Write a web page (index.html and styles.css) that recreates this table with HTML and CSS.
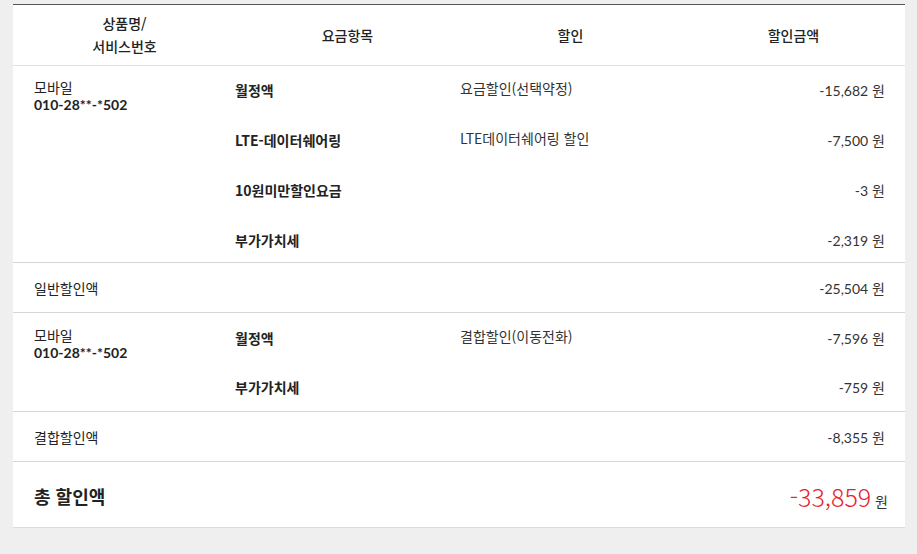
FILE: index.html
```html
<!DOCTYPE html>
<html lang="ko">
<head>
<meta charset="utf-8">
<title>할인 내역</title>
<link rel="stylesheet" href="styles.css">
</head>
<body>
<div class="panel">
  <div class="head">
    <div class="hcell">상품명/<br>서비스번호</div>
    <div class="hcell">요금항목</div>
    <div class="hcell">할인</div>
    <div class="hcell">할인금액</div>
  </div>

  <div class="group g1">
    <div class="svc">
      <div class="svc-name">모바일</div>
      <div class="svc-num">010-28**-*502</div>
    </div>
    <div class="items">
      <div class="item"><div class="iname">월정액</div><div class="idisc">요금할인(선택약정)</div><div class="amt"><span class="num">-15,682</span> <span class="won">원</span></div></div>
      <div class="item"><div class="iname">LTE-데이터쉐어링</div><div class="idisc">LTE데이터쉐어링 할인</div><div class="amt"><span class="num">-7,500</span> <span class="won">원</span></div></div>
      <div class="item"><div class="iname">10원미만할인요금</div><div class="idisc"></div><div class="amt"><span class="num">-3</span> <span class="won">원</span></div></div>
      <div class="item"><div class="iname">부가가치세</div><div class="idisc"></div><div class="amt"><span class="num">-2,319</span> <span class="won">원</span></div></div>
    </div>
  </div>

  <div class="sum">
    <div class="sum-label">일반할인액</div>
    <div class="amt"><span class="num">-25,504</span> <span class="won">원</span></div>
  </div>

  <div class="group g2">
    <div class="svc">
      <div class="svc-name">모바일</div>
      <div class="svc-num">010-28**-*502</div>
    </div>
    <div class="items">
      <div class="item"><div class="iname">월정액</div><div class="idisc">결합할인(이동전화)</div><div class="amt"><span class="num">-7,596</span> <span class="won">원</span></div></div>
      <div class="item"><div class="iname">부가가치세</div><div class="idisc"></div><div class="amt"><span class="num">-759</span> <span class="won">원</span></div></div>
    </div>
  </div>

  <div class="sum">
    <div class="sum-label">결합할인액</div>
    <div class="amt"><span class="num">-8,355</span> <span class="won">원</span></div>
  </div>

  <div class="total">
    <div class="total-label">총 할인액</div>
    <div class="total-amt"><span class="total-num">-33,859</span> <span class="won">원</span></div>
  </div>
</div>
</body>
</html>
```

FILE: styles.css
```css
html, body {
  margin: 0;
  padding: 0;
  background: #efefef;
}

body {
  padding: 4px 12px 0 13px;
  font-family: "Noto Sans CJK KR", "Noto Sans", sans-serif;
  font-size: 14px;
  color: #333;
}

.panel {
  background: #fff;
  border-top: 1px solid #555;
  border-bottom: 1px solid #dcdcdc;
  width: 892px;
}

.head {
  display: grid;
  grid-template-columns: repeat(4, 223px);
  height: 60px;
  border-bottom: 1px solid #e2e2e2;
}

.hcell {
  display: flex;
  align-items: center;
  justify-content: center;
  text-align: center;
  line-height: 23px;
  color: #222;
  font-weight: 500;
}

.group {
  display: flex;
  border-bottom: 1px solid #d6d6d6;
}

.g1 {
  padding: 12px 0 10px;
}

.g2 {
  padding: 13px 0 12px;
}

.svc {
  width: 201px;
  padding-left: 21px;
  line-height: 18px;
}

.svc-name {
  color: #222;
  line-height: 18px;
  height: 18px;
}

.svc-num {
  font-family: "Lato", "Noto Sans", sans-serif;
  font-weight: 700;
  color: #222;
  line-height: 18px;
  height: 18px;
}

.items {
  flex: 1;
  display: flex;
  flex-direction: column;
}

.g1 .items {
  gap: 26px;
}

.g2 .items {
  gap: 25px;
}

.item {
  display: grid;
  grid-template-columns: 225px 1fr auto;
  line-height: 24px;
  height: 24px;
}

.iname {
  font-weight: 700;
  color: #222;
}

.idisc {
  color: #333;
  margin-top: -2px;
}

.amt {
  padding-right: 20px;
  text-align: right;
  white-space: nowrap;
}

.num {
  font-family: "Lato", "Noto Sans", sans-serif;
  color: #333;
}

.won {
  font-family: "Noto Sans CJK KR", sans-serif;
  color: #333;
}

.sum {
  display: flex;
  justify-content: space-between;
  align-items: center;
  height: 49px;
  border-bottom: 1px solid #d6d6d6;
}

.sum-label {
  padding-left: 21px;
  color: #222;
}

.total {
  display: flex;
  justify-content: space-between;
  align-items: center;
  height: 65px;
}

.total-label {
  padding-left: 21px;
  font-size: 18px;
  font-weight: 700;
  color: #222;
  margin-top: 3px;
}

.total-amt {
  padding-right: 17px;
  white-space: nowrap;
  margin-top: 3px;
}

.total-num {
  font-family: "Noto Sans CJK KR", "Noto Sans", sans-serif;
  font-size: 25px;
  font-weight: 300;
  color: #e5232d;
}
```
